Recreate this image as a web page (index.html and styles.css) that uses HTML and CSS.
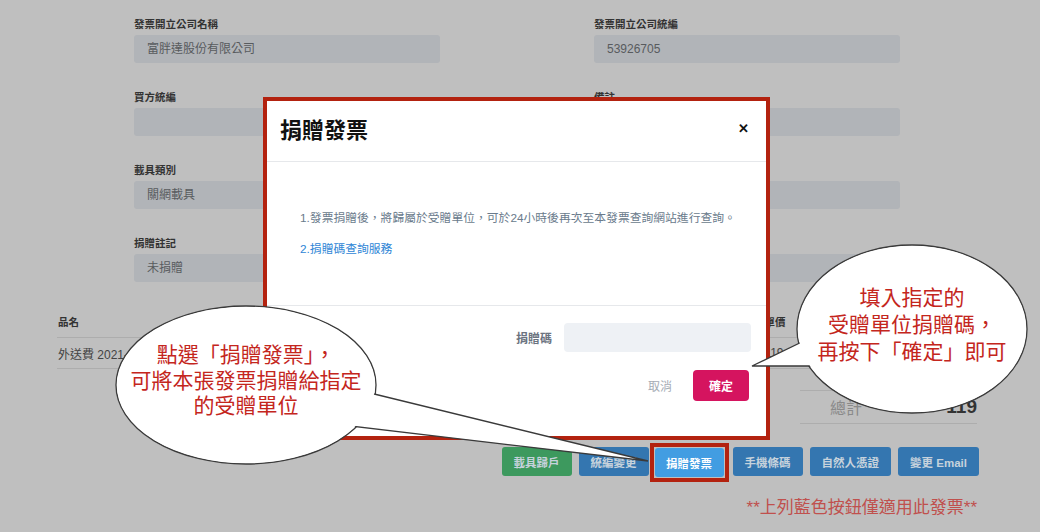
FILE: index.html
```html
<!DOCTYPE html>
<html lang="zh-Hant">
<head>
    <meta charset="UTF-8">
    <meta name="viewport" content="width=device-width, initial-scale=1.0">
    <title>捐贈發票</title>
    <link rel="stylesheet" href="styles.css">
</head>
<body>
    <!-- Pagina sotto il modale -->
    <div class="pagina">
        <div class="campi">
            <div class="campo">
                <div class="etichetta">發票開立公司名稱</div>
                <div class="valore">富胖達股份有限公司</div>
            </div>
            <div class="campo">
                <div class="etichetta">發票開立公司統編</div>
                <div class="valore">53926705</div>
            </div>
            <div class="campo">
                <div class="etichetta">買方統編</div>
                <div class="valore"></div>
            </div>
            <div class="campo">
                <div class="etichetta">備註</div>
                <div class="valore"></div>
            </div>
            <div class="campo">
                <div class="etichetta">載具類別</div>
                <div class="valore">關網載具</div>
            </div>
            <div class="campo">
                <div class="etichetta">載具號碼</div>
                <div class="valore"></div>
            </div>
            <div class="campo">
                <div class="etichetta">捐贈註記</div>
                <div class="valore">未捐贈</div>
            </div>
            <div class="campo">
                <div class="etichetta">捐贈碼</div>
                <div class="valore"></div>
            </div>
        </div>

        <table class="righe">
            <tr>
                <th class="nome">品名</th>
                <th class="num">單價</th>
                <th class="num"></th>
                <th class="num"></th>
            </tr>
            <tr>
                <td class="nome">外送費 2021-03-10</td>
                <td class="num">119</td>
                <td class="num"></td>
                <td class="num"></td>
            </tr>
        </table>

        <div class="totale">
            <span class="totale-label">總計</span>
            <span class="totale-valore">119</span>
        </div>

        <div class="azioni">
            <button class="btn verde">載具歸戶</button>
            <button class="btn blu">統編變更</button>
            <span class="cornice"><button class="btn attivo">捐贈發票</button></span>
            <button class="btn blu">手機條碼</button>
            <button class="btn blu">自然人憑證</button>
            <button class="btn blu">變更 Email</button>
        </div>
        <p class="nota">**上列藍色按鈕僅適用此發票**</p>
    </div>

    <!-- Modale -->
    <div class="modale">
        <div class="modale-testa">
            <span class="titolo">捐贈發票</span>
            <span class="chiudi">&#x2715;</span>
        </div>
        <div class="modale-corpo">
            <p class="info">1.發票捐贈後，將歸屬於受贈單位，可於24小時後再次至本發票查詢網站進行查詢。</p>
            <p class="link">2.捐贈碼查詢服務</p>
        </div>
        <div class="modale-piede">
            <div class="riga-codice">
                <label class="codice-label">捐贈碼</label>
                <input class="codice" type="text">
            </div>
            <div class="riga-bottoni">
                <span class="annulla">取消</span>
                <button class="conferma">確定</button>
            </div>
        </div>
    </div>

    <!-- Fumetti -->
    <svg class="fumetti" width="1040" height="532" viewBox="0 0 1040 532">
        <ellipse cx="246" cy="385" rx="130" ry="79" fill="#fff" stroke="#3a3a3a" stroke-width="1.3"/>
        <polygon points="366,392 648,461 350,426" fill="#fff" stroke="#3a3a3a" stroke-width="1.3"/>
        <ellipse cx="246" cy="385" rx="129" ry="78" fill="#fff"/>

        <ellipse cx="912" cy="329" rx="115" ry="84" fill="#fff" stroke="#3a3a3a" stroke-width="1.3"/>
        <polygon points="810,338 752,366 818,366" fill="#fff" stroke="#3a3a3a" stroke-width="1.3"/>
        <ellipse cx="912" cy="329" rx="114" ry="83" fill="#fff"/>
    </svg>
    <div class="fumetto-testo sinistra">點選「捐贈發票」，<br>可將本張發票捐贈給指定<br>的受贈單位</div>
    <div class="fumetto-testo destra">填入指定的<br>受贈單位捐贈碼，<br>再按下「確定」即可</div>
</body>
</html>
```

FILE: styles.css
```css
:root{
    --bg-color: #bfbfbf;
    --campo-bg: #b1b4b8;
    --testo: #2e2e2e;
    --rosso-cornice: #b3220f;
    --rosso-testo: #c4261d;
}
body{
    margin: 0;
    width: 1040px;
    height: 532px;
    overflow: hidden;
    position: relative;
    background-color: var(--bg-color);
    font-family: "Liberation Sans", "Noto Sans CJK TC", sans-serif;
    color: var(--testo);
}
.pagina{
    width: 920px;
    margin-left: 57px;
    padding-top: 16px;
}
.campi{
    display: grid;
    grid-template-columns: 306px 306px;
    column-gap: 154px;
    row-gap: 26px;
    padding-left: 77px;
}
.etichetta{
    font-size: 10.5px;
    font-weight: bold;
    line-height: 16px;
    margin-bottom: 3px;
    color: #333;
}
.valore{
    height: 28px;
    line-height: 28px;
    padding-left: 13px;
    font-size: 12px;
    color: #585b5e;
    background-color: var(--campo-bg);
    border-radius: 3px;
}
.righe{
    width: 100%;
    margin-top: 24px;
    border-collapse: collapse;
}
.righe th{
    height: 29px;
    font-size: 10.5px;
    font-weight: bold;
    text-align: left;
    color: #333;
    border-bottom: 1px solid #adadad;
}
.righe td{
    height: 28px;
    font-size: 12px;
    color: #444;
    border-bottom: 1px solid #adadad;
}
.righe .nome{
    width: 713px;
}
.righe .num{
    width: 70px;
}
.totale{
    width: 177px;
    margin-left: auto;
    margin-top: 21px;
    height: 32px;
    border-top: 1px solid #adadad;
    border-bottom: 1px solid #adadad;
    display: flex;
    align-items: center;
    justify-content: space-between;
}
.totale-label{
    margin-left: 30px;
    font-size: 16px;
    color: #8a8a8a;
}
.totale-valore{
    font-size: 19px;
    font-weight: bold;
    color: #333;
}
.azioni{
    display: flex;
    justify-content: flex-end;
    align-items: center;
    gap: 7px;
    margin-top: 22px;
    margin-right: -2px;
}
.btn{
    height: 29px;
    border: 0;
    border-radius: 3px;
    padding: 0 12px;
    font-family: inherit;
    font-size: 11.5px;
    font-weight: bold;
    color: #c6d2dc;
}
.verde{
    background-color: #3d995e;
    min-width: 70px;
}
.blu{
    background-color: #3476b0;
    min-width: 70px;
}
.cornice{
    border: 4px solid var(--rosso-cornice);
    padding: 1px;
    margin: -3px -3px -5px -6px;
    display: flex;
}
.attivo{
    background-color: #429de2;
    color: #fff;
    width: 69px;
    height: 29px;
    padding: 0;
}
.nota{
    margin: 19px 0 0 0;
    text-align: right;
    font-size: 17px;
    line-height: 24px;
    color: #c0504d;
}
.modale{
    position: absolute;
    left: 263px;
    top: 97px;
    width: 499px;
    height: 335px;
    border: 4px solid var(--rosso-cornice);
    background-color: #fff;
    display: flex;
    flex-direction: column;
}
.modale-testa{
    height: 54px;
    border-bottom: 1px solid #e6e8eb;
    display: flex;
    align-items: center;
    justify-content: space-between;
    padding: 0 17px 6px 13px;
}
.titolo{
    font-size: 22px;
    font-weight: bold;
    color: #111;
    font-family: "Noto Sans CJK TC", sans-serif;
}
.chiudi{
    font-size: 13px;
    font-weight: bold;
    color: #111;
}
.modale-corpo{
    height: 144px;
    border-bottom: 1px solid #e6e8eb;
    padding-left: 33px;
    box-sizing: border-box;
    padding-top: 46px;
}
.info{
    margin: 0;
    font-size: 11.8px;
    line-height: 20px;
    color: #6a7b8c;
}
.link{
    margin: 11px 0 0 0;
    font-size: 11.8px;
    line-height: 20px;
    color: #2f86d6;
}
.modale-piede{
    flex: 1;
    padding: 17px 15px 0 0;
}
.riga-codice{
    display: flex;
    justify-content: flex-end;
    align-items: center;
    gap: 12px;
}
.codice-label{
    font-size: 12px;
    font-weight: bold;
    color: #6b7380;
}
.codice{
    width: 187px;
    height: 29px;
    border: 0;
    border-radius: 4px;
    background-color: #eef1f5;
    box-sizing: border-box;
}
.riga-bottoni{
    display: flex;
    justify-content: flex-end;
    align-items: center;
    gap: 21px;
    margin-top: 18px;
    margin-right: 2px;
}
.annulla{
    font-size: 12px;
    color: #a5acb5;
}
.conferma{
    width: 56px;
    height: 31px;
    border: 0;
    border-radius: 4px;
    background-color: #d5145f;
    color: #fff;
    font-family: inherit;
    font-size: 12px;
    font-weight: bold;
}
.fumetti{
    position: absolute;
    left: 0;
    top: 0;
    pointer-events: none;
}
.fumetto-testo{
    position: absolute;
    text-align: center;
    font-family: "Liberation Sans", "Noto Sans CJK TC", sans-serif;
    font-size: 21px;
    line-height: 25.5px;
    color: var(--rosso-testo);
    white-space: nowrap;
}
.sinistra{
    left: 96px;
    width: 300px;
    top: 342px;
}
.destra{
    left: 762px;
    width: 300px;
    top: 284px;
    line-height: 27px;
}
```
